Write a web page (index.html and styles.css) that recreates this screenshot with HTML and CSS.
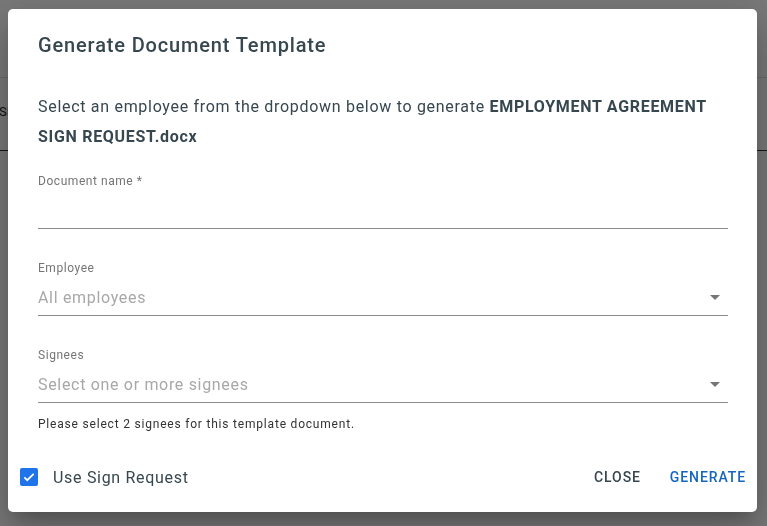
FILE: index.html
```html
<!DOCTYPE html>
<html lang="en">
<head>
  <meta charset="UTF-8" />
  <meta name="viewport" content="width=device-width, initial-scale=1.0"/>
  <title>Generate Document Template</title>
  <link rel="stylesheet" href="styles.css">
</head>
<body>
  <div class="page">
    <div class="page-top"></div>
    <div class="page-tabs"><span>SIGN</span></div>
  </div>

  <div class="backdrop">
    <div class="dialog">
      <h2 class="title">Generate Document Template</h2>
      <p class="intro">Select an employee from the dropdown below to generate <b>EMPLOYMENT AGREEMENT SIGN REQUEST.docx</b></p>

      <div class="field">
        <label class="field-label">Document name *</label>
        <div class="field-input"></div>
      </div>

      <div class="field">
        <label class="field-label">Employee</label>
        <div class="field-input">
          <span class="placeholder">All employees</span>
          <span class="arrow"></span>
        </div>
      </div>

      <div class="field">
        <label class="field-label">Signees</label>
        <div class="field-input">
          <span class="placeholder">Select one or more signees</span>
          <span class="arrow"></span>
        </div>
      </div>
      <p class="hint">Please select 2 signees for this template document.</p>

      <div class="actions">
        <label class="check">
          <span class="box">
            <svg width="14" height="14" viewBox="0 0 24 24"><path d="M4 12.5l5 5L20 6.5" fill="none" stroke="#fff" stroke-width="3"/></svg>
          </span>
          Use Sign Request
        </label>
        <div class="buttons">
          <button class="btn">CLOSE</button>
          <button class="btn primary">GENERATE</button>
        </div>
      </div>
    </div>
  </div>
</body>
</html>
```

FILE: styles.css
```css
body {
  margin: 0;
  font-family: Roboto, 'Liberation Sans', sans-serif;
  background: #ffffff;
  color: #37474f;
}
.page-top {
  height: 77px;
  border-bottom: 1px solid #e0e0e0;
}
.page-tabs {
  height: 72px;
  border-bottom: 1px solid #333;
  line-height: 68px;
  font-size: 13px;
  margin-left: -1px;
  color: #222;
}
.backdrop {
  position: fixed;
  inset: 0;
  background: rgba(0, 0, 0, 0.53);
}
.dialog {
  position: absolute;
  left: 8px;
  top: 9px;
  width: 749px;
  height: 503px;
  box-sizing: border-box;
  background: #fff;
  border-radius: 5px;
  padding: 24px 29px 0 30px;
  box-shadow: 0 11px 15px -7px rgba(0,0,0,0.2), 0 24px 38px 3px rgba(0,0,0,0.14), 0 9px 46px 8px rgba(0,0,0,0.12);
}
.title {
  margin: 0;
  font-size: 20px;
  line-height: 24px;
  font-weight: 500;
  letter-spacing: 0.85px;
  color: #37474f;
}
.intro {
  margin: 35px 0 0;
  font-size: 16px;
  line-height: 30px;
  letter-spacing: 0.7px;
  color: #37474f;
}
.intro b {
  font-weight: 700;
}
.field {
  margin-top: 21px;
  border-bottom: 1px solid #8c8c8c;
}
.field + .field {
  margin-top: 31px;
}
.field-label {
  display: block;
  font-size: 12px;
  line-height: 16px;
  letter-spacing: 0.55px;
  color: #757575;
  margin-bottom: 4px;
}
.field-input {
  height: 35px;
  display: flex;
  align-items: center;
  justify-content: space-between;
}
.placeholder {
  font-size: 16px;
  letter-spacing: 0.68px;
  color: #a8a8a8;
}
.arrow {
  width: 0;
  height: 0;
  border-left: 5px solid transparent;
  border-right: 5px solid transparent;
  border-top: 5px solid #757575;
  margin-right: 8px;
}
.hint {
  margin: 13px 0 0;
  font-size: 12px;
  line-height: 16px;
  letter-spacing: 0.8px;
  color: #333;
}
.actions {
  position: absolute;
  left: 12px;
  right: 3px;
  bottom: 9px;
  height: 52px;
  display: flex;
  align-items: center;
  justify-content: space-between;
}
.check {
  display: flex;
  align-items: center;
  gap: 15px;
  font-size: 16px;
  letter-spacing: 0.7px;
  color: #37474f;
}
.box {
  width: 18px;
  height: 18px;
  border-radius: 2px;
  background: #1e74e8;
  display: flex;
  align-items: center;
  justify-content: center;
}
.buttons {
  display: flex;
  gap: 13px;
}
.btn {
  border: 0;
  background: none;
  font-family: inherit;
  font-size: 14px;
  font-weight: 500;
  letter-spacing: 0.9px;
  padding: 0 8px;
  height: 36px;
  color: #37474f;
}
.btn.primary {
  color: #1565c0;
}
```
